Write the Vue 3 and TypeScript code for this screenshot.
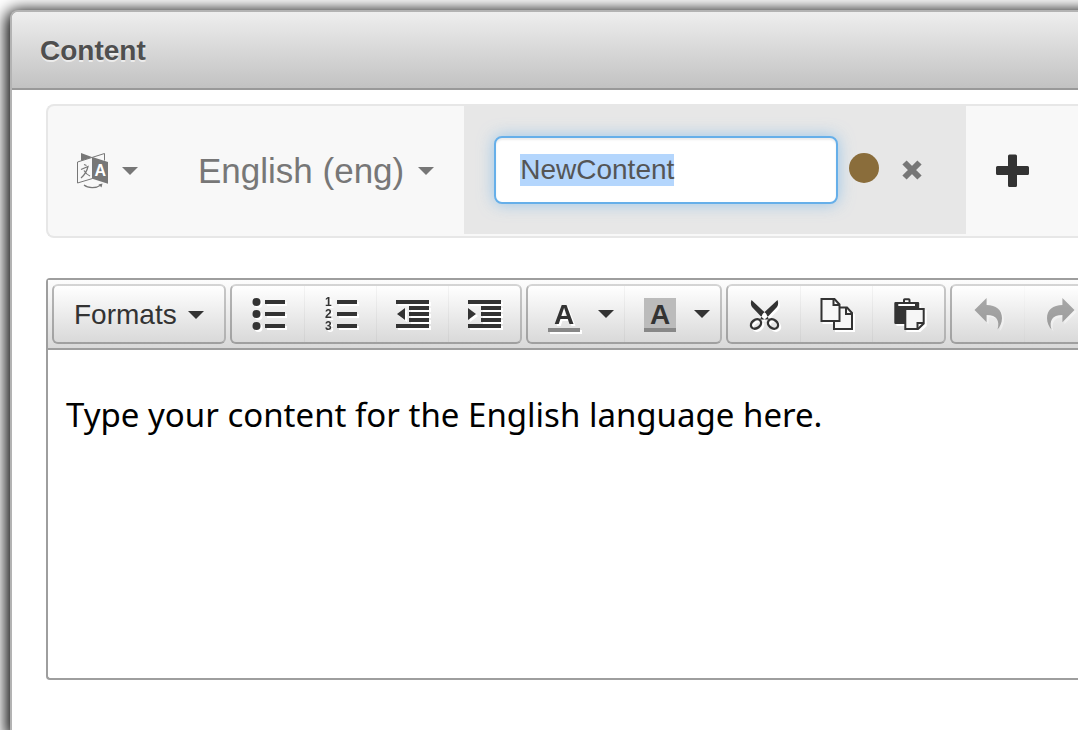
<script setup lang="ts">
import { onMounted, ref } from 'vue'

const name = ref('NewContent')
const nameInput = ref<HTMLInputElement | null>(null)

onMounted(() => {
  nameInput.value?.focus()
  nameInput.value?.select()
})
</script>

<template>
  <div class="page">
    <section class="dialog" aria-labelledby="dialog-title">
      <header class="dialog-head">
        <h1 id="dialog-title">Content</h1>
      </header>
      <div class="dialog-body">
        <nav class="navbar">
          <button type="button" class="nav-item" aria-label="Translate" aria-haspopup="true">
            <svg class="translate" viewBox="0 0 34 36" aria-hidden="true">
              <path d="M5 0 16.500 4.300 5 8Z" fill="#777" />
              <path d="M16.500 4.300 28.500.500V7.500" fill="none" stroke="#777" />
              <path d="M1.500 9 16.500 4.300V25.500L1.500 30Z" fill="#f8f8f8" stroke="#777" />
              <path d="M16.300 4 32 9V30.700L16.300 25.700Z" fill="#777" />
              <path d="M8 11.500 10.500 12.500M5 16.500 12 13.500C11 18 8.500 22 5 25M8 17.500C9.500 20 11.500 22 14 23" fill="none" stroke="#777" stroke-width="1.200" />
              <text x="18.500" y="23" class="glyph" font-size="16" fill="#fff">A</text>
              <path d="M8 32C12 35.500 20 35.500 25 32" fill="none" stroke="#777" stroke-width="1.200" />
              <path d="M22.500 31.500 26.500 30.500 25.500 34.500Z" fill="#777" />
            </svg>
            <span class="caret"></span>
          </button>
          <button type="button" class="nav-item language" aria-haspopup="true">
            <span>English (eng)</span>
            <span class="caret"></span>
          </button>
          <div class="tab">
            <input ref="nameInput" v-model="name" type="text" class="name" aria-label="Content name" spellcheck="false" />
            <span class="dot"></span>
            <button type="button" class="plain remove" aria-label="Remove">
              <svg viewBox="0 0 20 20" width="20" height="20" aria-hidden="true">
                <path d="M2.500 2.500 17.500 17.500M17.500 2.500 2.500 17.500" stroke="#777" stroke-width="6" />
              </svg>
            </button>
          </div>
          <button type="button" class="plain add" aria-label="Add">
            <svg viewBox="0 0 33 33" width="33" height="33" aria-hidden="true">
              <path d="M13.500.500h6q1.500 0 1.500 1.500v10h10.500q1.500 0 1.500 1.500v6q0 1.500-1.500 1.500H21v10.500q0 1.500-1.500 1.500h-6q-1.500 0-1.500-1.500V21H1.500Q0 21 0 19.500v-6Q0 12 1.500 12H12V2q0-1.500 1.500-1.500Z" fill="#333" />
            </svg>
          </button>
        </nav>

        <div class="editor">
          <div class="toolbar" role="toolbar" aria-label="Formatting">
            <div class="group">
              <button type="button" class="tool formats" aria-haspopup="true">
                Formats <span class="caret"></span>
              </button>
            </div>
            <div class="group">
              <button type="button" class="tool" aria-label="Bullet list">
                <svg class="icon" viewBox="0 0 32 32" aria-hidden="true">
                  <circle cx="4.500" cy="4" r="4" /><circle cx="4.500" cy="16" r="4" /><circle cx="4.500" cy="28" r="4" />
                  <path d="M13 2h20v4H13zM13 14h20v4H13zM13 26h20v4H13z" />
                </svg>
              </button>
              <button type="button" class="tool" aria-label="Numbered list">
                <svg class="icon" viewBox="0 0 32 32" aria-hidden="true">
                  <text x="1" y="8" class="glyph" font-size="12">1</text>
                  <text x="1" y="20" class="glyph" font-size="12">2</text>
                  <text x="1" y="32" class="glyph" font-size="12">3</text>
                  <path d="M13 2h20v4H13zM13 14h20v4H13zM13 26h20v4H13z" />
                </svg>
              </button>
              <button type="button" class="tool" aria-label="Decrease indent">
                <svg class="icon" viewBox="0 0 32 32" aria-hidden="true">
                  <path d="M0 2h33v4H0zM13 8h20v4H13zM13 14h20v4H13zM13 20h20v4H13zM0 26h33v4H0zM9 10v12L1 16z" />
                </svg>
              </button>
              <button type="button" class="tool" aria-label="Increase indent">
                <svg class="icon" viewBox="0 0 32 32" aria-hidden="true">
                  <path d="M0 2h33v4H0zM13 8h20v4H13zM13 14h20v4H13zM13 20h20v4H13zM0 26h33v4H0zM0 10v12L8 16z" />
                </svg>
              </button>
            </div>
            <div class="group">
              <button type="button" class="tool main" aria-label="Text color">
                <svg class="icon" viewBox="0 0 32 32" aria-hidden="true">
                  <text x="16" y="26" class="glyph" font-size="28" text-anchor="middle">A</text>
                  <path d="M0 30h32v4H0z" fill="#888" />
                </svg>
              </button>
              <button type="button" class="tool open" aria-label="Choose text color"><span class="caret"></span></button>
              <button type="button" class="tool main" aria-label="Background color">
                <svg class="icon flat" viewBox="0 0 32 32" aria-hidden="true">
                  <path d="M0 0h32v30H0z" fill="#bbb" />
                  <text x="16" y="26" class="glyph" font-size="28" text-anchor="middle">A</text>
                  <path d="M0 30h32v4H0z" fill="#888" />
                </svg>
              </button>
              <button type="button" class="tool open" aria-label="Choose background color"><span class="caret"></span></button>
            </div>
            <div class="group">
              <button type="button" class="tool" aria-label="Cut">
                <svg class="icon" viewBox="0 0 32 32" aria-hidden="true">
                  <path d="M3.500 2 18 15.500 21 21.500 16.500 21.500 12.500 18 4 9Q2 6 3.500 2ZM29.500 2 15 15.500 12 21.500 16.500 21.500 20.500 18 29 9Q31 6 29.500 2Z" />
                  <ellipse cx="8" cy="26" rx="5.500" ry="4.200" fill="none" stroke="#333" stroke-width="2.400" transform="rotate(-38 8 26)" />
                  <ellipse cx="25" cy="26" rx="5.500" ry="4.200" fill="none" stroke="#333" stroke-width="2.400" transform="rotate(38 25 26)" />
                  <circle cx="16.500" cy="18" r="2.200" fill="#fff" />
                </svg>
              </button>
              <button type="button" class="tool" aria-label="Copy">
                <svg class="icon" viewBox="0 0 32 32" aria-hidden="true">
                  <g fill="none" stroke="#333" stroke-width="2">
                    <path fill="#f6f6f6" d="M14 9.500h13L32 15v16H14z" />
                    <path d="M26 9.500V16h6" />
                    <path fill="#f8f8f8" d="M1.500 1H14.500L19.500 6.500V23H1.500z" />
                    <path d="M13.500 1.500V7H19" />
                  </g>
                </svg>
              </button>
              <button type="button" class="tool" aria-label="Paste">
                <svg class="icon" viewBox="0 0 32 32" aria-hidden="true">
                  <path d="M3.500 4H11V2q0-1.700 1.700-1.700h4Q18.500.300 18.500 2v2H26q1.200 0 1.200 1.200V26H3.500Q2.300 26 2.300 24.800V5.200Q2.300 4 3.500 4Z" />
                  <path d="M13 2.300h3.500V4H13zM6.300 6H23v2H6.300z" fill="#fff" />
                  <path d="M13.300 11H31.700V25.500L26 31H13.300z" fill="#f6f6f6" stroke="#333" stroke-width="2" />
                  <path d="M31.500 25H25.500V31" fill="none" stroke="#333" stroke-width="2" />
                </svg>
              </button>
            </div>
            <div class="group">
              <button type="button" class="tool" aria-label="Undo" disabled>
                <svg class="icon" viewBox="0 0 32 32" aria-hidden="true">
                  <path d="M2.500 12 14.600 0V7C24 7 30 12 30 20 30 25 28 28.500 25.500 31.500 28 23 25 17 14.600 17V24.300Z" />
                </svg>
              </button>
              <button type="button" class="tool" aria-label="Redo" disabled>
                <svg class="icon" viewBox="0 0 32 32" aria-hidden="true">
                  <path d="M30.500 12 18.400 0V7C9 7 3 12 3 20 3 25 5 28.500 7.500 31.500 5 23 8 17 18.400 17V24.300Z" />
                </svg>
              </button>
            </div>
          </div>
          <div class="content" contenteditable="true" role="textbox" aria-multiline="true" aria-label="Content text" spellcheck="false">
            <p>Type your content for the English language here.</p>
          </div>
        </div>
      </div>
    </section>
  </div>
</template>

<style>
body {
  background: #fff;
}
</style>

<style scoped>
.page {
  box-sizing: border-box;
  display: flex;
  min-height: 100vh;
  padding: 10px 0 0 10px;
  overflow: hidden;
  font-family: "Liberation Sans", Arial, sans-serif;
  font-size: 28px;
  line-height: 32px;
  color: #333;
}

button {
  margin: 0;
  padding: 0;
  border: 0;
  background: none;
  font: inherit;
  color: inherit;
}

.dialog {
  flex: 1;
  min-width: 0;
  margin-right: -32px;
  border: 2px solid #b3b3b3;
  border-width: 2px 0 0 2px;
  border-radius: 8px 0 0 0;
  background: #fff;
  box-shadow: 0 4px 16px 4px #000;
}

.dialog-head {
  padding: 23px 28px 21px;
  border-bottom: 2px solid #999;
  border-radius: 6px 0 0 0;
  background: linear-gradient(#eee, #c2c2c2);
}

h1 {
  margin: 0;
  font-size: 28px;
  line-height: 32px;
  color: #4f4f4f;
  text-shadow: 0 2px 0 rgba(255, 255, 255, .6);
}

.dialog-body {
  padding: 14px 0 0 34px;
}

.navbar {
  display: flex;
  height: 130px;
  border: 2px solid #e7e7e7;
  border-right: 0;
  border-radius: 8px 0 0 8px;
  background: #f8f8f8;
  overflow: hidden;
}

.nav-item {
  display: flex;
  align-items: center;
  gap: 12px;
  height: 130px;
  padding: 0 30px;
  font-size: 35px;
  color: #777;
  white-space: nowrap;
}

.nav-item:first-child {
  padding-left: 28px;
}

.nav-item.language {
  gap: 14px;
}

.translate {
  width: 34px;
  height: 36px;
}

.glyph {
  font-family: "Liberation Sans", Arial, sans-serif;
  font-weight: 700;
}

.caret {
  display: inline-block;
  border: 8px solid transparent;
  border-top-color: currentColor;
  border-bottom: 0;
}

.tab {
  display: flex;
  align-items: center;
  height: 128px;
  padding: 0 44px 0 30px;
  background: #e7e7e7;
}

.name {
  box-sizing: border-box;
  width: 344px;
  height: 68px;
  padding: 0 24px;
  border: 2px solid #66afe9;
  border-radius: 8px;
  outline: 0;
  background: #fff;
  font: inherit;
  color: #555;
  box-shadow: inset 0 2px 2px rgba(0, 0, 0, .075), 0 0 16px rgba(102, 175, 233, .6);
}

.name::selection {
  background: rgba(180, 214, 253, .996);
  color: #555;
}

.dot {
  width: 30px;
  height: 30px;
  margin: 0 23px 4px 11px;
  border-radius: 50%;
  background: #8a6d3b;
}

.plain {
  display: flex;
  align-items: center;
}

.add {
  padding: 0 30px;
  height: 128px;
}

.editor {
  margin-top: 40px;
  border: 2px solid #9e9e9e;
  border-right: 0;
  border-radius: 4px 0 0 4px;
}

.toolbar {
  display: flex;
  gap: 4px;
  padding: 4px;
  border-bottom: 2px solid #9e9e9e;
  background: linear-gradient(#fdfdfd, #d9d9d9);
  overflow: hidden;
}

.group {
  display: flex;
  flex: none;
  border: 2px solid;
  border-color: rgba(0, 0, 0, .15) rgba(0, 0, 0, .2) rgba(0, 0, 0, .27) rgba(0, 0, 0, .27);
  border-radius: 6px;
  background: linear-gradient(#fff, #d9d9d9) padding-box;
}

.tool {
  display: flex;
  align-items: center;
  justify-content: center;
  box-sizing: border-box;
  width: 72px;
  height: 56px;
}

.tool + .tool:not(.open) {
  box-shadow: inset 1px 0 rgba(0, 0, 0, .04);
}

.tool.formats {
  width: auto;
  gap: 11px;
  padding: 2px 20px 0;
}

.tool.main {
  width: 62px;
  padding: 0 10px 0 20px;
}

.tool.open {
  width: 34px;
  padding: 0 10px 0 8px;
}

.icon {
  flex: none;
  width: 32px;
  height: 32px;
  overflow: visible;
  fill: #333;
  filter: drop-shadow(2px 2px 0 #fff);
}

.icon.flat {
  filter: none;
}

.tool:disabled {
  opacity: .4;
}

.content {
  min-height: 328px;
  box-sizing: border-box;
  padding: 44px 18px;
  font-family: "Noto Sans", "Open Sans", sans-serif;
  font-size: 33px;
  line-height: 42px;
  color: #000;
}

.content p {
  margin: 0;
}
</style>
